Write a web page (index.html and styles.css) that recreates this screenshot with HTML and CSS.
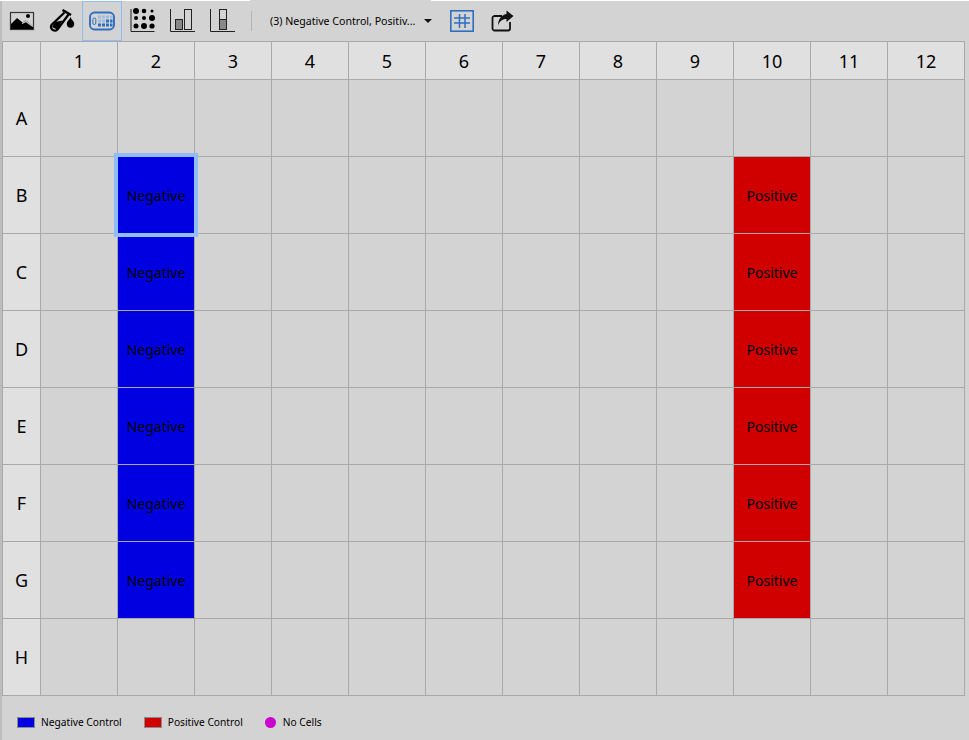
FILE: index.html
```html
<!DOCTYPE html>
<html lang="en">
<head>
  <meta charset="UTF-8">
  <title>Plate Layout</title>
  <link rel="stylesheet" href="styles.css">
</head>
<body>
  <div class="topline"></div>
  <div class="toolbar">
    <button class="tool">
      <svg width="26" height="20" viewBox="0 0 26 20"><rect x="1.500" y="1.500" width="23" height="17" fill="none" stroke="#333" stroke-width="1.200"/><path d="M2 18 L2 13 L8 7 L13.500 11.500 L17 9.500 L24 15 L24 18 Z" fill="#000"/><path d="M13 12.500 L17 10.500 L24 15.500" fill="none" stroke="#d3d3d3" stroke-width="1.300"/><circle cx="19" cy="5" r="2" fill="#000"/></svg>
    </button>
    <button class="tool">
      <svg width="26" height="24" viewBox="0 0 26 24"><path d="M13.500 1 L22 6" stroke="#000" stroke-width="2.400" fill="none"/><path d="M15.500 3.500 L2.500 16 A3.800 3.800 0 0 0 8.500 20.500 L19.500 5.500" stroke="#000" stroke-width="2.200" fill="none"/><path d="M6 13 L13.500 11.500 L8 20.500 L3 18 Z" fill="#000"/><path d="M21.500 8 C22.500 11 25.200 12 25.200 15 A3.700 3.700 0 0 1 17.800 15 C17.800 12 20.500 11 21.500 8 Z" fill="#000"/></svg>
    </button>
    <button class="tool tool-on">
      <svg width="26" height="20" viewBox="0 0 26 20"><rect x="1" y="1.500" width="24" height="17" rx="4.500" fill="none" stroke="#2f6fc0" stroke-width="1.900"/><rect x="3.800" y="7" width="3" height="6.500" rx="1.500" fill="none" stroke="#2f6fc0" stroke-width="1"/><g fill="#9dbce2"><rect x="9" y="4.500" width="3" height="3"/><rect x="13" y="4.500" width="3" height="3"/><rect x="17" y="4.500" width="3" height="3"/><rect x="21" y="4.500" width="2.500" height="3"/><rect x="9" y="8.500" width="3" height="3"/><rect x="13" y="8.500" width="3" height="3"/></g><g fill="#2f6fc0"><rect x="17" y="8.500" width="3" height="3"/><rect x="21" y="8.500" width="2.500" height="3"/><rect x="9" y="12.500" width="3" height="3"/><rect x="13" y="12.500" width="3" height="3"/><rect x="17" y="12.500" width="3" height="3"/><rect x="21" y="12.500" width="2.500" height="3"/></g></svg>
    </button>
    <button class="tool">
      <svg width="26" height="26" viewBox="0 0 26 26"><path d="M2 1 V23.500 H25.500" fill="none" stroke="#222" stroke-width="1"/><g fill="#000"><circle cx="7" cy="3" r="3"/><circle cx="15" cy="3" r="2.300"/><circle cx="23" cy="3" r="1.500"/><circle cx="7" cy="10" r="2"/><circle cx="15" cy="10" r="2"/><circle cx="23" cy="10" r="3"/><circle cx="7" cy="18" r="2.500"/><circle cx="15" cy="18" r="3"/><circle cx="23" cy="18" r="2.600"/></g></svg>
    </button>
    <button class="tool">
      <svg width="26" height="26" viewBox="0 0 26 26"><path d="M1.500 1 V23.500 H26" fill="none" stroke="#222" stroke-width="1"/><rect x="6.500" y="11.500" width="7" height="10" fill="#888" stroke="#222"/><rect x="15.500" y="1.500" width="7" height="20" fill="none" stroke="#222"/></svg>
    </button>
    <button class="tool">
      <svg width="26" height="26" viewBox="0 0 26 26"><path d="M1.500 1 V23.500 H26" fill="none" stroke="#222" stroke-width="1"/><rect x="10.500" y="1.500" width="7" height="10" fill="none" stroke="#222"/><rect x="10.500" y="11.500" width="7" height="10" fill="#888" stroke="#222"/></svg>
    </button>
    <span class="sep"></span>
    <div class="combo">
      <span>(3) Negative Control, Positiv...</span>
      <span class="arrow"></span>
    </div>
    <button class="tool tool-hash">
      <svg width="24" height="22" viewBox="0 0 24 22"><rect x="0.800" y="0.800" width="22.400" height="20.400" fill="none" stroke="#2f6fc0" stroke-width="1.600"/><path d="M9.500 4 V18 M15 4 V18 M4 8 H20 M4 13 H20" stroke="#2f6fc0" stroke-width="1.500" fill="none"/></svg>
    </button>
    <button class="tool tool-share">
      <svg width="24" height="22" viewBox="0 0 24 22"><path d="M11 6 H3 A2 2 0 0 0 1.500 8 V18.500 A2 2 0 0 0 3 20.500 H17 A2 2 0 0 0 19 18.500 V12" fill="none" stroke="#111" stroke-width="1.800"/><path d="M15.500 0.500 L22.500 6 L15.500 12 V9 C11 9 8.500 11.500 7 15.500 C7 10 10 5 15.500 4 Z" fill="#111"/></svg>
    </button>
  </div>

  <div class="plate" id="plate"></div>

  <div class="legend">
    <span class="legend-item"><i class="swatch swatch-neg"></i>Negative Control</span>
    <span class="legend-item"><i class="swatch swatch-pos"></i>Positive Control</span>
    <span class="legend-item"><i class="dot"></i>No Cells</span>
  </div>

  <script src="plate.js"></script>
</body>
</html>
```

FILE: styles.css
```css
body {
  margin: 0;
  background: linear-gradient(to right, #bdbdbd 2px, #d3d3d3 2px);
  font-family: 'Noto Sans', sans-serif;
  color: #000;
  overflow: hidden;
}

.topline {
  height: 1px;
  background: linear-gradient(to right, #fff 250px, #d3d3d3 250px, #d3d3d3 431px, #fff 431px);
}

.toolbar {
  height: 40px;
  display: flex;
  align-items: center;
  box-sizing: border-box;
  padding-left: 2px;
}

.tool {
  width: 40px;
  height: 40px;
  margin: 0;
  padding: 0;
  border: 1px solid transparent;
  background: none;
  display: flex;
  align-items: center;
  justify-content: center;
}

.tool-on {
  border-color: #92bdf2;
}

.tool-hash {
  width: 24px;
  height: 22px;
  border: none;
  margin-left: 17px;
}

.tool-share {
  width: 24px;
  height: 22px;
  border: none;
  margin-left: 17px;
}

.sep {
  width: 1px;
  height: 20px;
  background-color: #b4b4b4;
  margin-left: 9px;
}

.combo {
  display: flex;
  align-items: center;
  margin-left: 18px;
  width: 163px;
  font-size: 10.600px;
  white-space: nowrap;
}

.arrow {
  margin-left: 9px;
  border-left: 4px solid transparent;
  border-right: 4px solid transparent;
  border-top: 4px solid #111;
}

.plate {
  display: grid;
  grid-template-columns: 37px repeat(12, 76px);
  grid-template-rows: 37px repeat(8, 76px);
  gap: 1px;
  width: max-content;
  margin-left: 2px;
  padding: 1px;
  background-color: #a9a9a9;
}

.head {
  background-color: #e0e0e0;
  display: flex;
  align-items: center;
  justify-content: center;
  font-size: 18px;
}

.well {
  background-color: #d3d3d3;
  display: flex;
  align-items: center;
  justify-content: center;
  font-size: 14px;
  position: relative;
}

.well-neg {
  background-color: #0000e1;
}

.well-pos {
  background-color: #d10000;
}

.well-selected {
  z-index: 1;
}

.well-selected::after {
  content: '';
  position: absolute;
  inset: -4px;
  border: 4px solid #90bdf8;
}

.legend {
  display: flex;
  align-items: center;
  height: 52px;
  padding-left: 17px;
  font-size: 10.200px;
}

.legend-item {
  display: flex;
  align-items: center;
  margin-right: 22px;
}

.swatch {
  width: 16px;
  height: 9px;
  border: 1px solid #8a8a8a;
  margin-right: 6px;
}

.swatch-neg {
  background-color: #0000e1;
}

.swatch-pos {
  background-color: #d10000;
}

.dot {
  width: 11px;
  height: 11px;
  border-radius: 50%;
  background-color: #cc00cc;
  margin-right: 7px;
}
```

FILE: plate.js
```js
const plate = document.getElementById('plate');
const rows = ['A', 'B', 'C', 'D', 'E', 'F', 'G', 'H'];

function addCell(className, text) {
  const cell = document.createElement('div');
  cell.className = className;
  cell.textContent = text;
  plate.appendChild(cell);
}

addCell('head', '');
for (let c = 1; c <= 12; c++) {
  addCell('head', c);
}

rows.forEach((row) => {
  addCell('head', row);
  for (let c = 1; c <= 12; c++) {
    const filled = row !== 'A' && row !== 'H';
    if (filled && c === 2) {
      addCell(row === 'B' ? 'well well-neg well-selected' : 'well well-neg', 'Negative');
    } else if (filled && c === 10) {
      addCell('well well-pos', 'Positive');
    } else {
      addCell('well', '');
    }
  }
});
```
